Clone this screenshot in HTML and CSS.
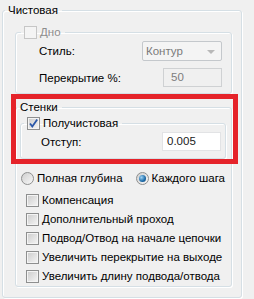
FILE: index.html
```html
<!DOCTYPE html>
<html lang="ru">
<head>
  <meta charset="UTF-8">
  <title>Чистовая</title>
  <link rel="stylesheet" href="styles.css">
</head>
<body>

<div class="panel">
  <fieldset class="group outer">
    <legend class="title">Чистовая</legend>

    <fieldset class="group sub bottom-group">
      <legend class="title check-title">
        <span class="box disabled"></span><span class="muted">Дно</span>
      </legend>
      <div class="row">
        <span class="label">Стиль:</span>
        <div class="combo">Контур<span class="arrow"></span></div>
      </div>
      <div class="row">
        <span class="label">Перекрытие %:</span>
        <div class="field off">50</div>
      </div>
    </fieldset>

    <fieldset class="group sub walls">
      <legend class="title walls-title">Стенки</legend>

      <fieldset class="group inner">
        <legend class="title check-title">
          <span class="box">
            <svg viewBox="0 0 11 11" width="11" height="11"><path d="M2 5.5 L4.3 8.5 L9.2 1.5" fill="none" stroke="#2a57a8" stroke-width="1.8"/></svg>
          </span><span>Получистовая</span>
        </legend>
        <div class="row">
          <span class="label">Отступ:</span>
          <div class="field">0.005</div>
        </div>
      </fieldset>

      <div class="radios">
        <label class="opt"><span class="radio"></span>Полная глубина</label>
        <label class="opt"><span class="radio on"></span>Каждого шага</label>
      </div>

      <div class="options">
        <label class="opt"><span class="box"></span>Компенсация</label>
        <label class="opt"><span class="box"></span>Дополнительный проход</label>
        <label class="opt"><span class="box"></span>Подвод/Отвод на начале цепочки</label>
        <label class="opt"><span class="box"></span>Увеличить перекрытие на выходе</label>
        <label class="opt"><span class="box"></span>Увеличить длину подвода/отвода</label>
      </div>
    </fieldset>
  </fieldset>

  <!-- red marker drawn over the "Стенки" block -->
  <div class="highlight"></div>
</div>

</body>
</html>
```

FILE: styles.css
```css
body {
  margin: 0;
  background-color: #f0f0f0;
  font-family: "Liberation Sans", Arial, sans-serif;
  font-size: 11.5px;
  color: #000;
}
.panel {
  position: relative;
  width: 254px;
  height: 299px;
  overflow: hidden;
}
.group {
  margin: 0;
  padding: 0;
  border: 1px solid #d5dfe5;
  border-radius: 3px;
  box-shadow: inset 1px 1px 0 #fff, 1px 1px 0 #fff;
  min-width: 0;
}
.title {
  height: 14px;
  line-height: 14px;
  padding: 0 4px 0 3px;
  display: flex;
  align-items: center;
}
.outer {
  width: 240px;
  box-sizing: border-box;
  margin: 3px 0 0 2px;
  padding-bottom: 10px;
}
.outer > .title {
  margin-left: 2px;
}
.sub {
  margin: 0 9px 0 12px;
}
.bottom-group {
  margin-top: 8px;
  padding: 2px 9px 6px 0;
}
.check-title {
  margin-left: 5px;
  gap: 3px;
}
.muted {
  color: #8d8d8d;
}
.row {
  display: flex;
  justify-content: space-between;
  align-items: center;
  padding-left: 23px;
}
.row + .row {
  margin-top: 7px;
}
.combo {
  position: relative;
  width: 80px;
  height: 20px;
  box-sizing: border-box;
  border: 1px solid #c4c8cc;
  border-radius: 2px;
  background-color: #f4f4f4;
  color: #7a7a7a;
  line-height: 18px;
  padding-left: 3px;
}
.arrow {
  position: absolute;
  right: 6px;
  top: 8px;
  border-left: 4px solid transparent;
  border-right: 4px solid transparent;
  border-top: 4px solid #b8b8b8;
}
.field {
  width: 59px;
  height: 19px;
  box-sizing: border-box;
  border: 1px solid #e2e3e5;
  background-color: #fff;
  line-height: 17px;
  padding-left: 4px;
  color: #1a1a1a;
}
.field.off {
  border-color: #cfd1d3;
  background-color: #f0f0f0;
  color: #7d7d7d;
  padding-left: 7px;
}
.walls {
  margin-top: 6px;
  padding-bottom: 3px;
}
.walls-title {
  margin-left: 1px;
}
.inner {
  margin: 2px 5px 0 4px;
  padding: 2px 4px 7px 0;
}
.inner .check-title {
  margin-left: 3px;
}
.inner .row {
  padding-left: 20px;
}
.opt {
  display: flex;
  align-items: center;
  gap: 3px;
  height: 14px;
  white-space: nowrap;
}
.radios {
  display: flex;
  gap: 13px;
  margin: 12px 0 0 5px;
}
.options {
  display: flex;
  flex-direction: column;
  gap: 5px;
  margin: 8px 0 0 10px;
}
.box {
  width: 13px;
  height: 13px;
  box-sizing: border-box;
  border: 1px solid #8e8f8f;
  background: linear-gradient(135deg, #cbcbcb, #f6f6f6);
  box-shadow: inset 0 0 0 1px #f4f4f4;
  display: flex;
  align-items: center;
  justify-content: center;
  flex-shrink: 0;
}
.box.disabled {
  border-color: #c6c6c6;
  background: #f4f4f4;
  box-shadow: none;
}
.radio {
  width: 13px;
  height: 13px;
  box-sizing: border-box;
  border: 1px solid #8e8f8f;
  border-radius: 50%;
  background: linear-gradient(135deg, #cfcfcf, #f8f8f8);
  flex-shrink: 0;
  position: relative;
}
.radio.on::after {
  content: "";
  position: absolute;
  left: 2px;
  top: 2px;
  width: 7px;
  height: 7px;
  border-radius: 50%;
  background: radial-gradient(circle at 35% 35%, #9fd3f5, #1b6aa8 60%, #0e3f6e);
}
.highlight {
  position: absolute;
  left: 11px;
  top: 94px;
  width: 227px;
  height: 70px;
  box-sizing: border-box;
  border: 5px solid #e5232a;
}
```
